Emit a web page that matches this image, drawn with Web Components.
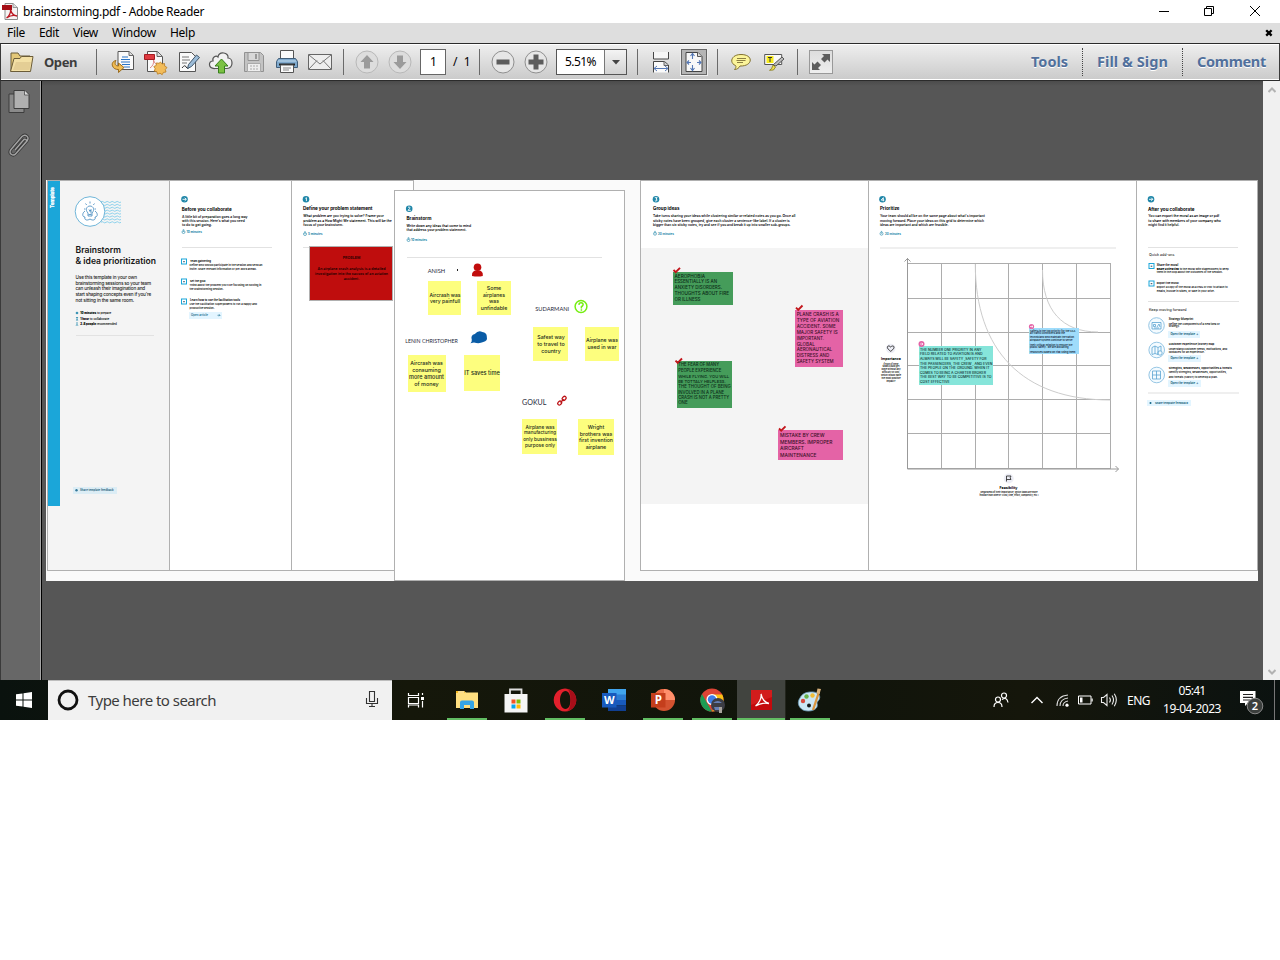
<!DOCTYPE html>
<html lang="en">
<head>
<meta charset="utf-8">
<title>brainstorming.pdf - Adobe Reader</title>
<style>
html,body{margin:0;background:#fff}
body{width:1280px;height:960px;overflow:hidden;font-family:"Noto Sans","Open Sans",sans-serif}
</style>
</head>
<body>
<reader-app></reader-app>
<script>
const define = (name, html, after) => customElements.define(name, class extends HTMLElement {
  constructor(){ super(); this.attachShadow({mode:'open'}); this.shadowRoot.innerHTML = html; }
  connectedCallback(){ if (after) after.call(this, this.shadowRoot); }
});

/* One line of text set to a given measure: w = width, s = font size */
define('fit-text', `<style>:host{display:block;white-space:nowrap}span{display:inline-block}</style><span><slot></slot></span>`,
function(root){
  const w = +this.getAttribute('w'), s = +this.getAttribute('s'), span = root.querySelector('span');
  if (s) this.style.fontSize = s + 'px';
  if (!w) return;
  const n = this.textContent.length, nat = span.getBoundingClientRect().width;
  const size = parseFloat(getComputedStyle(this).fontSize);
  const k = Math.min(1.12, Math.max(.78, w / nat));
  if (this.hasAttribute('flex')) this.style.fontSize = size * k + 'px';
  const now = span.getBoundingClientRect().width;
  span.style.letterSpacing = (w - now) / n + 'px';
});

define('title-bar', `<style>
:host{display:flex;height:23px;background:#fff;align-items:center;color:#000;font-size:12px}
svg{display:block}.logo{margin:0 4px 0 2px}fit-text{flex:1}
.win{display:flex;width:138px}.win svg{width:46px;height:20px}
</style>
<svg class="logo" width="17" height="17" viewBox="0 0 17 17"><path d="M3 .5h8l4.500 4V16.500H3z" fill="#f5f3f3" stroke="#8b8b8b"/><path d="M11 .5v4h4.500" fill="#ddd" stroke="#999"/><path d="M0 2h10v5H0z" fill="#a40d16"/><path d="M4.500 15c3-2 4.500-6 4-8.500 1 4 3 6 6.500 6.500-3-1.200-7-.3-10.500 2z" fill="none" stroke="#bb1721" stroke-width="1.300"/></svg>
<fit-text w="181">brainstorming.pdf - Adobe Reader</fit-text>
<div class="win"><svg viewBox="0 0 46 20"><path d="M17 9.500h10" stroke="#000"/></svg>
<svg viewBox="0 0 46 20"><path d="M16.500 6.500h7v7h-7zM18.500 6V4.500h7v7H24" fill="none" stroke="#000"/></svg>
<svg viewBox="0 0 46 20"><path d="M16 4l10 10m0-10l-10 10" stroke="#000" fill="none"/></svg></div>`);

define('menu-bar', `<style>
:host{display:flex;height:20px;background:#dedede;align-items:center;padding:0 7px 0 7px;box-sizing:border-box;font-size:12px;color:#000}
fit-text{margin-right:14px;line-height:18px}svg{margin-left:auto;margin-bottom:1px}
</style><fit-text w="18">File</fit-text><fit-text w="20">Edit</fit-text><fit-text w="25">View</fit-text><fit-text w="44">Window</fit-text><fit-text w="25">Help</fit-text>
<svg width="8" height="8" viewBox="0 0 8 8"><path d="M1.200 1.200l5.400 5.400m0-5.400L1.200 6.600" stroke="#000" stroke-width="2.300"/></svg>`);

define('tool-cell', `<style>
:host{display:flex;width:var(--w,33px);flex:none;align-items:center;justify-content:center;height:35px}
</style><slot></slot>`);
define('tool-sep', `<style>:host{display:block;width:var(--w,14px);flex:none}i{display:block;width:1px;height:26px;margin-left:7px;background:#6a6a6a}</style><i></i>`);
define('task-link', `<style>
:host{display:flex;align-items:center;height:28px;padding:0 14px;color:#51709c;font-weight:700;font-size:14.500px;text-shadow:0 1px #fff;border-right:1px dotted #444}
:host(:last-child){border:0;padding-right:13px}
::slotted(*){margin-bottom:2px}
</style><slot></slot>`);

define('tool-bar', `<style>
:host{display:flex;align-items:center;height:38px;box-sizing:border-box;border-top:1px solid #2b2b2b;border-bottom:1px solid #2b2b2b;background:linear-gradient(#fff 0 1px,#eee 1px,#cbcbcb 35px,#fff 35px);border-left:1px solid #3a3a3a;border-right:1px solid #3a3a3a;padding-left:8px}
svg{display:block;overflow:visible}
tool-cell>svg{margin-bottom:1px}
.open{width:45px;margin-left:9px;font-weight:700;font-size:13px;color:#3d3d3d}
.page{box-sizing:border-box;width:26px;height:26px;margin-left:4px;background:#fff;border:1px solid #666;font-size:12px;line-height:23px;padding-left:9px}
.of{width:19px;padding-left:7px;font-size:12px;margin-bottom:1px}
.combo{box-sizing:border-box;width:71px;height:26px;margin:0 3px 0 4px;background:#fff;border:1px solid #555;display:flex;align-items:center;font-size:12px;padding-left:8px}
.combo fit-text{margin-bottom:1px}
.combo b{margin-left:auto;width:21px;height:24px;border-left:1px solid #777;background:linear-gradient(#f4f4f4,#d2d2d2);display:flex;align-items:center;justify-content:center}
.on{box-sizing:border-box;width:26px;height:26px;border:1px solid #666;background:#b5b5b5;outline:1px solid #eee;display:flex;align-items:center;justify-content:center}
.full{box-sizing:border-box;width:24px;height:24px;border:1px solid #999;background:linear-gradient(#ddd,#eee)}
.links{margin-left:auto;display:flex}
</style>
<tool-cell style="--w:26px"><svg width="26" height="24" viewBox="0 0 26 24"><path d="M2 21V3h7l2 3h10v4" fill="#e4c878" stroke="#6b5c38"/><path d="M1.500 21.500L5 8.500l6 0 1.500-2H24L21.500 21.500z" fill="#f3e0a5" stroke="#6b5c38"/><path d="M4 20L7 12h15l-1.500 8z" fill="#dbc28b" opacity=".6"/></svg></tool-cell>
<div class="open"><fit-text w="33">Open</fit-text></div><tool-sep style="--w:16px"></tool-sep>
<tool-cell><svg width="26" height="26" viewBox="0 0 26 26"><path d="M9 2.500h11l4.500 4V20.500H9z" fill="#fafafa" stroke="#555"/><path d="M20 2.500v4h4" fill="#ddd" stroke="#666"/><path d="M13 8h6M12 10.500h9M12 13h9M13 15.500h8M15 18h6" stroke="#2b75c5" stroke-width="1.200"/><path d="M7 11.500c-3 .5-4.500 3-3.500 5.500 1 2.500 3 3.500 6 3.500v3l5.500-5-5.500-4.500v3c-3 0-4.500-2-2.500-5.500z" fill="#f0bb52" stroke="#9a6c1e"/></svg></tool-cell>
<tool-cell><svg width="26" height="26" viewBox="0 0 26 26"><path d="M5.500 2.500h10l5 5V22.500h-15z" fill="#fafafa" stroke="#555"/><path d="M15 2.500v5h5" fill="#ddd" stroke="#666"/><path d="M2.500 5.500h10v5h-10z" fill="#df3a40" stroke="#a51c22"/><path d="M8 19c3-2 4-5 3.500-8 1 3 2 4 4 5" fill="none" stroke="#d88" stroke-width="1"/><path d="M18.500 13l1.500 2 2.500-.5.2 2.600 2.300 1.400-1.700 2 .7 2.500-2.600.4-1.200 2.300-2.200-1.500-2.400 1-.8-2.500-2.600-.6 1-2.400-1.400-2.200 2.400-1 .2-2.600 2.600.4z" fill="#f2bc5a" stroke="#b87b20" stroke-width=".8"/></svg></tool-cell>
<tool-cell><svg width="26" height="26" viewBox="0 0 26 26"><path d="M4.500 3.500h12l4 4V22.500h-16z" fill="#fafafa" stroke="#555"/><path d="M7 8h7M7 11h8M7 14h5" stroke="#777"/><path d="M7 19q3-4 4-1t4 0" fill="none" stroke="#333"/><path d="M21.500 6l3 2.500-8 9-4 2 1-4z" fill="#9cbcd8" stroke="#42586c"/></svg></tool-cell>
<tool-cell><svg width="26" height="26" viewBox="0 0 26 26"><path d="M7 19.500C0 20 0 12 5 12 4 8 8 6 10 8c1-6 11-5 10 1 5 0 6 10-1 10.500z" fill="#f2f2f2" stroke="#555" stroke-width="1.200"/><path d="M13.500 10l6.500 7h-3.500v7h-6v-7H7z" fill="#7bc143" stroke="#38801c"/></svg></tool-cell>
<tool-cell><svg width="26" height="26" viewBox="0 0 26 26"><path d="M3.500 3.500h16l3 3v16h-19z" fill="#c3c3c3" stroke="#929292"/><path d="M7 3.500h11v8H7z" fill="#d8d8d8" stroke="#929292"/><path d="M14 5h2v5h-2z" fill="#999"/><path d="M6.500 14.500h13v8h-13z" fill="#eee" stroke="#aaa"/><path d="M9 17h8M9 20h8" stroke="#aaa" stroke-dasharray="2 1"/></svg></tool-cell>
<tool-cell><svg width="26" height="26" viewBox="0 0 26 26"><path d="M6.500 1.500h13v9h-13z" fill="#fafafa" stroke="#555"/><path d="M2.500 12.500l2-3h17l2 3v6h-21z" fill="#7fa9cd" stroke="#405d78"/><path d="M4 12h18" stroke="#c6def0"/><path d="M5 15.500h16" stroke="#222" stroke-width="2"/><path d="M6.500 16h13v7.500h-13z" fill="#fafafa" stroke="#555"/><path d="M9 19h8M9 21h6" stroke="#888"/></svg></tool-cell>
<tool-cell><svg width="26" height="26" viewBox="0 0 26 26"><path d="M1.500 5.500h23v15h-23z" fill="#eee" stroke="#666"/><path d="M2 20l8-8.500M24 20l-8-8.500M2 6l11 9L24 6" fill="none" stroke="#777"/></svg></tool-cell>
<tool-sep></tool-sep>
<tool-cell><svg width="24" height="24" viewBox="0 0 24 24"><circle cx="12" cy="12" r="11" fill="#ddd" stroke="#b8b8b8"/><path d="M12 5l6.500 7H15v6.500H9V12H5.500z" fill="#9b9b9b"/></svg></tool-cell>
<tool-cell><svg width="24" height="24" viewBox="0 0 24 24"><circle cx="12" cy="12" r="11" fill="#ddd" stroke="#b8b8b8"/><path d="M12 19l6.500-7H15V5.500H9V12H5.500z" fill="#9b9b9b"/></svg></tool-cell>
<div class="page">1</div><div class="of">/&nbsp; 1</div><tool-sep></tool-sep>
<tool-cell><svg width="24" height="24" viewBox="0 0 24 24"><circle cx="12" cy="12" r="11" fill="#e6e6e6" stroke="#8f8f8f"/><path d="M5.500 9.500h13v5h-13z" fill="#5c5c5c"/></svg></tool-cell>
<tool-cell><svg width="24" height="24" viewBox="0 0 24 24"><circle cx="12" cy="12" r="11" fill="#e6e6e6" stroke="#8f8f8f"/><path d="M4.500 9.500h5v-5h5v5h5v5h-5v5h-5v-5h-5z" fill="#5c5c5c"/></svg></tool-cell>
<div class="combo"><fit-text w="31">5.51%</fit-text><b><svg width="8" height="5"><path d="M0 0h8L4 4.500z" fill="#444"/></svg></b></div>
<tool-sep></tool-sep>
<tool-cell><svg width="18" height="22" viewBox="0 0 18 22"><path d="M1.500 1v7h15V1" fill="#f5f5f5" stroke="#444"/><path d="M1.500 21.500V10.500h11l4 3.500v7.500" fill="#fafafa" stroke="#444"/><path d="M12 10.500v4h4" fill="#ccc" stroke="#666"/><path d="M2 17.500h14M5 15l-3 2.500L5 20m8-5l3 2.500-3 2.500" fill="none" stroke="#5578b5"/></svg></tool-cell>
<tool-cell><div class="on"><svg width="18" height="20" viewBox="0 0 18 20"><path d="M1 .5h12l4 4v15H1z" fill="#f8f8f8" stroke="#444"/><path d="M12.500 .5v4h4" fill="#ddd" stroke="#555"/><path d="M7.500 2v5m0 6v5M2 10.500h4m6 0h4M5.500 4l2-2.500L9.500 4m-4 12l2 2.500 2-2.500M4 8.500l-2 2 2 2M14 8.500l2 2-2 2" fill="none" stroke="#5578b5" stroke-width="1.100"/></svg></div></tool-cell>
<tool-sep></tool-sep>
<tool-cell><svg width="20" height="18" viewBox="0 0 20 18"><path d="M10 1.500c13 0 12 12-1 11.500-1 2-3 3.500-5.500 3.500 1-1 2-3 1-4C-2 10 0 1.500 10 1.500z" fill="#fbf49a" stroke="#82722f"/><path d="M6 5.500h9M5.500 7.500h9M6 9.500h6" stroke="#8c7f42"/></svg></tool-cell>
<tool-cell><svg width="20" height="18" viewBox="0 0 20 18"><path d="M.7 1.500h17v10H.7z" fill="#fafafa" stroke="#555"/><path d="M2.500 3h7v7h-7z" fill="#f6ea1c"/><path d="M4 4.500h4M6 4.500V9" stroke="#333"/><path d="M18 4l2 2-8 7-3-1z" fill="#bbb" stroke="#555"/><path d="M9 12l2.500 2-2 3-4 .3 2-1.500z" fill="#f0df4c" stroke="#857a20" stroke-width=".8"/></svg></tool-cell>
<tool-sep></tool-sep>
<tool-cell style="--w:34px"><div class="full"><svg width="22" height="22" viewBox="0 0 22 22"><path d="M12 3h8v8l-2.500-2.500-3 3-3.500-3.500 3-3zM10 19H2v-8l2.500 2.500 3-3L11 14l-3 3z" fill="#5c5c5c"/></svg></div></tool-cell>
<div class="links"><task-link><fit-text w="37">Tools</fit-text></task-link><task-link><fit-text w="71">Fill &amp; Sign</fit-text></task-link><task-link><fit-text w="69">Comment</fit-text></task-link></div>`);

define('side-pane', `<style>
:host{display:flex;flex-direction:column;align-items:center;gap:19px;width:42px;box-sizing:border-box;padding-top:8px;background:#676767;border-left:1px solid #3a3a3a;border-right:1px solid #000;box-shadow:inset -1px 0 #a5a5a5}
svg{display:block;margin-right:4px}
</style>
<svg width="22" height="25" viewBox="0 0 22 25"><path d="M1 5h15v18.500H1z" fill="#8a8a8a" stroke="#3d3d3d"/><path d="M6 1.500h11l4 4V19.500H6z" fill="#b0b0b0" stroke="#3d3d3d"/><path d="M16.500 1.500v4.500h4" fill="#ddd" stroke="#3d3d3d" stroke-width=".7"/></svg>
<svg width="22" height="24" viewBox="0 0 22 24"><g fill="none"><path d="M7 17l8.500-10c1.500-2 4 0 2.500 2L8 20.500c-3 3.500-8 0-5-4L14 3.500c3-3 8 0 5 4.500L12 16" stroke="#383838" stroke-width="3"/><path d="M7 17l8.500-10c1.500-2 4 0 2.500 2L8 20.500c-3 3.500-8 0-5-4L14 3.500c3-3 8 0 5 4.500L12 16" stroke="#a4a4a4" stroke-width="1.400"/></g></svg>`);

define('scroll-rail', `<style>:host{display:flex;flex-direction:column;justify-content:space-between;align-items:center;width:17px;box-sizing:border-box;background:#f0f0f0;padding:6px 0 5px}svg{display:block}</style>
<svg width="8" height="6"><path d="M.5 5L4 1.500 7.500 5" fill="none" stroke="#b2b2b2" stroke-width="2"/></svg><svg width="8" height="6"><path d="M.5 1L4 4.500 7.500 1" fill="none" stroke="#b2b2b2" stroke-width="2"/></svg>`);

/* Board items are placed on a free canvas in document coordinates */
const X0 = 46, Y0 = 180;
function place(){ const a = n => +this.getAttribute(n); this.style.cssText += `left:${a('x')-X0}px;top:${a('y')-Y0}px;width:${a('w')}px;height:${a('h')}px;background:${this.getAttribute('c')||'#fff'}`; }
define('board-frame', `<style>:host{position:absolute;box-sizing:border-box;border:1px solid #b0b0b0}</style><slot></slot>`, place);
define('sticky-note', `<style>:host{position:absolute}</style><slot></slot>`, place);

const T = (x, s, style, rows, center) => rows.map(([cy, w, t]) =>
  `<fit-text flex w="${w}" s="${s}" style="position:absolute;left:${(center ? x - w/2 : x) - X0}px;top:${cy - 5 - Y0}px;height:10px;line-height:10px;${style}">${t}</fit-text>`).join('');
const B='font-weight:700;color:#000', M='font-weight:600;color:#000', U='font-weight:700;color:#1682a6';
const N = (x,y,w,h,c) => `<sticky-note x="${x}" y="${y}" w="${w}" h="${h}" c="${c}"></sticky-note>`;
const F = (x,w,c='#fff',y=180,h=391) => `<board-frame x="${x}" y="${y}" w="${w}" h="${h}" c="${c}"></board-frame>`;
const hr = (x,y,w,h=1) => N(x,y,w,h,h>1?'#efefef':'#e2e2e2');
const dot = (x,y,g) => `<circle cx="${x}" cy="${y}" r="3.300" fill="#1f86a8"/><path transform="translate(${x} ${y})" d="${g}" stroke="#fff" fill="none" stroke-width=".9"/>`;
const AR='M-2 0H1.800M.2-1.600L1.800 0 .2 1.600', box=(x,y)=>`<rect x="${x}" y="${y}" width="5" height="5" fill="#fff" stroke="#1ba6d9" stroke-width="1"/><path d="M${x+1.700} ${y+2.700}h1.600" stroke="#345"/>`;
const clock=(x,y)=>`<circle cx="${x}" cy="${y}" r="1.500" fill="none" stroke="#1682a6" stroke-width=".6"/><path d="M${x-.7} ${y-2.300}h1.400M${x} ${y-1}v1" stroke="#1682a6" stroke-width=".6"/>`;
const check=(x,y)=>`<path d="M${x-3} ${y}l2.200 2.200 4.300-4.400" stroke="#c3161c" stroke-width="1.900" fill="none"/>`;
const round=(x,y)=>`<circle cx="${x}" cy="${y}" r="7.800" fill="#f4fbff" stroke="#7cb8dd" stroke-width=".8"/>`;
const ping=(x,y,r)=>`<circle cx="${x}" cy="${y}" r="${r}" fill="#e463a6"/><path transform="translate(${x} ${y})" d="M-1.500 0H1.500M.2-1.200L1.500 0 .2 1.200" stroke="#fff" fill="none" stroke-width=".7"/>`;
const gx=[907.500,941.500,975.500,1008.500,1042.500,1076.500,1110.500], gy=[263.500,298.500,332.500,365.500,399.500,433.500,468.500];
let waves=''; for(let i=0;i<8;i++){ waves+=`<path d="M101 ${202+i*2.900}q1.200-1.200 2.500 0t2.500 0 2.500 0 2.500 0 2.500 0 2.500 0 2.500 0 2.500 0" fill="none" stroke="#62c3e8" stroke-width=".7"/>`; }

const art = `<svg viewBox="46 180 1212 401" width="1212" height="401">
${waves}<circle cx="90" cy="211.500" r="14.800" fill="#fff" stroke="#4ba3cf" stroke-width=".8"/>
<g fill="none" stroke="#3d87bd" stroke-width=".8"><path d="M88 213c-3-3-1.500-7 2-7s5 4 2 7v3h-4zM88.500 214.500h3M89 209.500l1 2 1-2v4"/><path d="M90 201.500v2M85.500 203.500l1.200 1.500M94.500 203.500l-1.200 1.500M84 209h1.500M94.500 209H96"/><path d="M85 211c-3 2-3 6 0 6-1 3 2 4 5 2 3 2 6 1 5-2 3 0 3-4 0-6"/></g>
<g fill="#3c95b5"><circle cx="77" cy="313" r="1.300"/><path d="M75.800 317h2.500l-1 1.700 1 1.700h-2.500l1-1.700z"/><circle cx="77" cy="323" r=".8"/><path d="M75.500 325.500q1.500-2.500 3 0z"/></g>
${dot(184.500,199.300,AR)}${dot(306,199.300,'M-.6-1L.4-1.600V1.800')}${dot(409.200,208.700,'M-1.200-1.500q3-.5 1.500 1.500l-1.500 1.600h2.800')}${dot(656,199.300,'M-1.200-1.600h2.400L0-.2q2 .5.500 1.800-.8.300-1.600-.2')}${dot(882.500,199.300,'M.8 2V-1.600L-1.300.8H1.800')}${dot(1151,199.300,AR)}
${clock(183.500,232)}${clock(305,234)}${clock(408.500,240)}${clock(655,233.700)}${clock(881.500,233.700)}
${box(181.500,259)}${box(181.500,279)}${box(181.500,299)}${box(1149,263.500)}${box(1149,281)}
<path d="M217.500 315.300h2.500m-1-1l1 1-1 1" stroke="#168" stroke-width=".6" fill="none"/>
<circle cx="477.500" cy="267.300" r="3.800" fill="#c10d0d"/><path d="M472 276q-.5-6 5.500-5.500 6-.5 5.300 5.500-5 1-10.800 0z" fill="#c10d0d"/><path d="M457.500 269v2" stroke="#222"/>
<circle cx="581" cy="306.500" r="5.900" fill="none" stroke="#76ee12" stroke-width="1.500"/><path d="M578.900 304.900q.2-2.200 2.300-2.100 2.200.2 1.900 2-.4 1.300-1.700 1.900v1.800M581.400 309.300v1.500" fill="none" stroke="#76ee12" stroke-width="1.500"/>
<path d="M474 342.500l-3.500.8q1.500-1.500 1.300-3.500-1.500-4.800 3-5.800 3.500-4 7.500-2 4.500.5 4.500 4.500 1 4.500-3.500 5.500-4 2-9.300.5z" fill="#0a5ca6"/>
<g fill="none" stroke="#bc1216" stroke-width="1.300"><rect x="557.500" y="401.500" width="4.300" height="3.200" rx="1.500" transform="rotate(-45 559.600 403)"/><rect x="562" y="396.700" width="4.300" height="3.200" rx="1.500" transform="rotate(-45 564.200 398.300)"/><path d="M560.500 402.500l3.200-3.300"/></g>
${check(676.500,270)}${check(799,307.700)}${check(678.500,360.700)}${check(782,428.500)}
<g stroke="#adadad" fill="none" stroke-width="1">${gx.map(x=>`<path d="M${x} 263V469"/>`).join('')}${gy.map(y=>`<path d="M907 ${y}H1111"/>`).join('')}
<path d="M907.500 258V469H1118.500M904.500 261.500l3-3 3 3M1115.500 466l3 3-3 3" stroke="#999"/></g>
<path d="M975.300 264C975.300 350 1022 400 1110.300 400M1042.500 270C1042.500 310 1062 332 1098 332" fill="none" stroke="#ccc"/>
<circle cx="890.700" cy="348.500" r="4.800" fill="#edeef6"/><path d="M890.700 351.300c-6-4-2.500-7 0-4.300 2.500-2.700 6 .3 0 4.300z" fill="none" stroke="#222" stroke-width=".9"/>
<circle cx="1008.700" cy="478.500" r="5" fill="#edeef6"/><path d="M1006.500 481.500v-5.500h4.500l-.8 1.800.8 1.700h-4.500" fill="none" stroke="#222" stroke-width=".8"/>
${round(1156.500,325.500)}${round(1156.700,350)}${round(1156.700,375)}
<g fill="none" stroke="#5aa5d2" stroke-width=".8"><path d="M1152 322.500h9v6.500h-9zM1153.500 324.500h2v2h-2zM1157 327l2-3 1 3M1154 328h5"/><path d="M1152 347.500l3-1.500v7.500l-3 1zM1155 346l3 1.500v7l-3-1M1158 347.500l3-1.500v5"/><circle cx="1160" cy="353" r="2.200"/><path d="M1152.500 371h8v8h-8zM1156.500 371v8M1152.500 375h8"/></g>
</svg>`;

const overlay = `<svg viewBox="46 180 1212 401" width="1212" height="401">${ping(921.500,344,3)}${ping(1031.500,326.500,2.600)}<circle cx="1150.500" cy="403" r="1" fill="#168"/><circle cx="76.500" cy="490.300" r="1.200" fill="#379"/></svg>`;
const Y='#fdfe7e', K='font-weight:500;color:#1c2b1c', D='font-weight:500;color:#0c2c18', R='font-weight:500;color:#3d1028', L='color:#1f2a3c;font-family:Lato,Inter,sans-serif;';

define('mural-board', `<style>
:host{display:block;position:relative;width:1212px;height:401px;background:#fafafa;font-family:Inter,"Liberation Sans",sans-serif;overflow:hidden}
svg{position:absolute;left:0;top:0;display:block}
.tag{position:absolute;left:1px;top:7px;width:12px;height:21px;writing-mode:vertical-rl;transform:rotate(180deg);font-size:4.600px;line-height:12px;font-weight:700;color:#fff;text-align:right;-webkit-text-stroke:.3px #fff}
</style>
${F(47,123,'#f4f4f4')}${F(169,123)}${F(291,123)}${F(394,231,'#fff',190,391)}${F(640,229)}${F(868,269)}${F(1136,122)}
${N(48,181,12,325,'#1ba6d9')}<div class="tag">Template</div>
${N(641,248,227,256,'#f4f4f4')}
${hr(76,335,78)}${hr(182,247,90)}${hr(303,247,10)}${hr(407,257,195)}${hr(880,247,236,2)}${hr(1148,247,90)}${hr(1148,301,91)}${hr(1148,392,91,2)}
<board-frame x="309" y="246" w="84" h="55" c="#bf0d0d"></board-frame>
${N(73,487,44,6.500,'#dcedf5')}${N(189,312,33,7,'#e3f5ff')}${N(1168,331,31.500,6.500,'#e3f5ff')}${N(1168,355,33,6.500,'#e3f5ff')}${N(1168,380,33,6.500,'#e3f5ff')}${N(1147,400,43.500,6,'#e3f5ff')}
${N(428,281,33,34,Y)}${N(477,281,34,34,Y)}${N(533,327,35,34,Y)}${N(585,327,34,34,Y)}${N(408,355,38,37,Y)}${N(464,355,36,36,Y)}${N(522,419,35,35,Y)}${N(578,419,36,36,Y)}
${N(673,272,60,33,'#459c5a')}${N(677,361,55,47,'#459c5a')}${N(795,310,48,57,'#e463a6')}${N(778,430,65,30,'#e463a6')}
${art}
${N(919,346,74,39,'#86e5da')}${N(1029,328,50,26,'#9fdcfb')}${overlay}
${T(75.500,9,'font-weight:600;color:#151515',[[250,45.500,'Brainstorm'],[261,80.500,'&amp; idea prioritization']])}
${T(75.500,6,'font-weight:500;color:#222',[[276.500,61.500,'Use this template in your own'],[282.500,75.500,'brainstorming sessions so your team'],[288,69.500,'can unleash their imagination and'],[293.500,75.500,'start shaping concepts even if you\'re'],[299.500,58.500,'not sitting in the same room.']])}
${T(80.300,3,M,[[313,31,'<b>10 minutes</b> to prepare'],[318.700,29,'<b>1 hour</b> to collaborate'],[324,36.500,'<b>2-8 people</b> recommended']])}
${T(80,3.200,'font-weight:700;color:#27637c',[[490,33.500,'Share template feedback']])}
${T(181.700,5,B,[[209.500,50,'Before you collaborate']])}
${T(182,4,M,[[216.500,65.500,'A little bit of preparation goes a long way'],[220.800,62.700,'with this session. Here\'s what you need'],[225,30,'to do to get going.']])}
${T(186.500,3.200,U,[[232,15.500,'10 minutes']])}
${T(190,3,B,[[261,21,'Team gathering'],[281,15.500,'Set the goal'],[300,50,'Learn how to use the facilitation tools']])}
${T(189.500,3,M,[[264.700,73,'Define who should participate in the session and send an'],[268.700,67,'invite. Share relevant information or pre-work ahead.'],[285.300,72,'Think about the problem you\'ll be focusing on solving in'],[289,34,'the brainstorming session.'],[304,67.500,'Use the Facilitation Superpowers to run a happy and'],[308,25,'productive session.']])}
${T(191,3,'font-weight:600;color:#166a8a',[[315,17,'Open article']])}
${T(303,5,B,[[208.500,69.500,'Define your problem statement']])}
${T(303.300,4,M,[[215.700,80.500,'What problem are you trying to solve? Frame your'],[220.500,88.500,'problem as a How Might We statement. This will be the'],[225,40,'focus of your brainstorm.']])}
${T(308,3.200,U,[[234,14.500,'5 minutes']])}
${T(351.500,4,'font-weight:600;color:#200',[[257.500,17.500,'PROBLEM'],[269,68,'An airplane crash analysis is a detailed'],[274,73,'investigation into the causes of an aviation'],[279,15.500,'accident.']],1)}
${T(406.500,4.800,B,[[218.500,25,'Brainstorm']])}${T(406.500,3.800,M,[[225.700,64.500,'Write down any ideas that come to mind'],[229.700,60,'that address your problem statement.']])}${T(411,3.200,U,[[240,16,'10 minutes']])}
${T(427.700,5.800,L,[[271,17.500,'ANISH']])}${T(535.200,5.800,L,[[309,34,'SUDARMANI']])}${T(405.300,5.800,L,[[341,52.500,'LENIN CHRISTOPHER']])}${T(522,7,L,[[402.500,24.500,'GOKUL']])}
${T(445,5.200,K,[[294.500,31,'Aircrash was'],[301.300,30,'very painfull']],1)}
${T(494,5.200,K,[[288.300,14.500,'Some'],[294.500,22,'airplanes'],[301.300,10,'was'],[308,26.500,'unfindable']],1)}
${T(551,5.200,K,[[337,27.500,'Safest way'],[344,27.500,'to travel to'],[351,19.500,'country']],1)}
${T(602,5.200,K,[[340.300,32,'Airplane was'],[347.300,29,'used in war']],1)}
${T(426.500,5.400,K,[[363,32.500,'Aircrash was'],[370,28.500,'consuming'],[377,35,'more amount'],[384,24.500,'of money']],1)}
${T(482,5.400,K,[[373,35.500,'IT saves time']],1)}
${T(540,4.900,K,[[427,29,'Airplane was'],[433,32,'manufacturing'],[439.300,33.500,'only bussiness'],[445.300,30,'purpose only']],1)}
${T(596,5.200,K,[[427,16.500,'Wright'],[433.500,32.500,'brothers was'],[440.300,34,'first invention'],[447,20.500,'airplane']],1)}
${T(653,4.800,B,[[208.500,26.500,'Group ideas']])}
${T(653,4,M,[[215.700,142.500,'Take turns sharing your ideas while clustering similar or related notes as you go. Once all'],[220.700,136.500,'sticky notes have been grouped, give each cluster a sentence-like label. If a cluster is'],[225,137.500,'bigger than six sticky notes, try and see if you and break it up into smaller sub-groups.']])}
${T(658,3.200,U,[[234,16,'20 minutes']])}
${T(674.500,5,D,[[276.300,30.500,'AEROPHOBIA'],[282.300,42.500,'ESSENTIALLY IS AN'],[288.300,47.500,'ANXIETY DISORDERS.'],[294.300,54.500,'THOUGHTS ABOUT FIRE'],[300.300,26,'OR ILLNESS']])}
${T(678.200,4.800,D,[[365.300,41,'THE FEAR OF MANY'],[371,43,'PEOPLE EXPERIENCE'],[376.500,51,'WHILE FLYING. YOU WILL'],[381.700,47.500,'BE TOTTALY HELPLESS.'],[387.300,52.500,'THE THOUGHT OF BEING'],[392.500,46,'INVOLVED IN A PLANE'],[397.700,51,'CRASH IS NOT A PRETTY'],[403.300,9.500,'ONE']])}
${T(796.700,5,R,[[315.300,42,'PLANE CRASH IS A'],[321.300,42.500,'TYPE OF AVIATION'],[327.300,39,'ACCIDENT. SOME'],[333.300,41,'MAJOR SAFETY IS'],[339.300,27.500,'IMPORTANT.'],[344.500,18,'GLOBAL'],[350.300,35.500,'AERONAUTICAL'],[356.300,32.500,'DISTRESS AND'],[362.300,37,'SAFETY SYSTEM']])}
${T(780,5.300,R,[[435.300,44.500,'MISTAKE BY CREW'],[442,52.500,'MEMBERS. IMPROPER'],[448.300,24,'AIRCRAFT'],[455,36.500,'MAINTENANCE']])}
${T(880,4.800,B,[[208.500,19.500,'Prioritize']])}
${T(880,4,M,[[215.700,105,'Your team should all be on the same page about what\'s important'],[220.700,104,'moving forward. Place your ideas on this grid to determine which'],[225,68.500,'ideas are important and which are feasible.']])}
${T(885,3.200,U,[[234,16,'20 minutes']])}
${T(891,3.800,B,[[359,20,'Importance']],1)}
${T(891,2.500,M,[[364,15,'If each of these'],[367,17,'tasks could get'],[370,19,'done without any'],[373,18,'difficulty or cost,'],[376,20,'which would have'],[379,19,'the most positive'],[382,9,'impact?']],1)}
${T(920,4.500,'font-weight:500;color:#0c2c2c',[[350,61.500,'THE NUMBER ONE PRIORITY IN ANY'],[354,62.500,'FIELD RELATED TO AVIATION IS AND'],[359,66.500,'ALWAYS WILL BE SAFETY ,SAFETY FOR'],[363.500,72.500,'THE PASSENGERS, THE CREW , AND EVEN'],[368,69.500,'THE PEOPLE ON THE GROUND. WHEN IT'],[373,66,'COMES TO BEING A CHARTER BROKER'],[377,71.500,'THE BEST WAY TO BE COMPETITIVE IS TO'],[382,29.500,'COST EFFECTIVE']])}
${T(1030,2.900,'font-weight:600;color:#123',[[331,45.500,'Safety is the top priority for the FAA'],[334.300,35,'air traffic controllers and the'],[338,44,'technicians who maintain the nation'],[341.300,42.500,'airspace system continue to serve'],[344.500,42.500,'their critical mission to ensure the'],[348.300,38.500,'public safety . we are allocating'],[351.500,45.500,'resources based on risk using them']])}
${T(1008.500,3.800,B,[[487.500,18,'Feasibility']],1)}${T(1009,2.500,M,[[493,57,'Regardless of their importance, which tasks are more'],[496.300,59,'feasible than others? (Cost, time, effort, complexity, etc.)']],1)}
${T(1148,5,B,[[209.500,46.500,'After you collaborate']])}
${T(1148.300,4,M,[[215.700,71,'You can export the mural as an image or pdf'],[220.700,72.500,'to share with members of your company who'],[225,31,'might find it helpful.']])}
${T(1149,4,'font-weight:500;color:#333',[[254.700,25.500,'Quick add-ons'],[309.700,37.500,'Keep moving forward']])}
${T(1156.700,3,B,[[265,21.500,'Share the mural'],[283,22,'Export the mural']])}
${T(1156.700,3,M,[[269,72,'<b>Share a view link</b> to the mural with stakeholders to keep'],[272.300,66,'them in the loop about the outcomes of the session.'],[287.300,71,'Export a copy of the mural as a PNG or PDF to attach to'],[290.700,58,'emails, include in slides, or save in your drive.']])}
${T(1168.700,3,B,[[319,24.500,'Strategy blueprint'],[344,45.500,'Customer experience journey map'],[368,63,'Strengths, weaknesses, opportunities &amp; threats']])}
${T(1168.700,3,M,[[324,51,'Define the components of a new idea or'],[327.300,11,'strategy.'],[349,58.500,'Understand customer needs, motivations, and'],[352.300,36,'obstacles for an experience.'],[373.300,58,'Identify strengths, weaknesses, opportunities,'],[377,49,'and threats (SWOT) to develop a plan.']])}
${T(1170.500,3.100,'font-weight:700;color:#155d7a',[[334.300,28,'Open the template →'],[358.300,28,'Open the template →'],[383.300,28,'Open the template →']])}
${T(1155,3.200,'font-weight:700;color:#155d7a',[[403,33,'Share template feedback']])}`);

define('doc-view', `<style>:host{display:flex;height:599px;background:#555}
main{flex:1;display:flex;align-items:flex-start;padding:99px 0 0 4px;background:linear-gradient(#4b4b4b,#565656 5px)}</style>
<side-pane></side-pane><main><mural-board></mural-board></main><scroll-rail></scroll-rail>`);

define('task-app', `<style>
:host{display:flex;box-sizing:border-box;width:49px;height:40px;align-items:center;justify-content:center;position:relative;flex:none}
:host([active]){background:#41443f;box-shadow:inset -1px 0 #23261d}
:host([open])::after{content:"";position:absolute;left:5px;right:4px;bottom:0;height:2px;background:#62bd63}
:host([active])::after{left:0!important;right:1px!important}
::slotted(svg){display:block;overflow:visible}
</style><slot></slot>`);

define('task-bar', `<style>
:host{display:flex;height:40px;background:linear-gradient(90deg,#0a120e,#15170a 32%,#10140b 65%,#15160b 80%,#0b1210);color:#fff}
.start{width:48px;display:flex;align-items:center;justify-content:center}
.search{box-sizing:border-box;width:344px;background:#f1f1f1;border-top:1px solid #bdbdbd;display:flex;align-items:center;color:#3c3c3c;font-size:15px;padding:0 12px 1px 9px}
.search fit-text{flex:1;margin-left:9px;margin-bottom:1px}
svg{display:block;overflow:visible}.tray{margin-left:auto;display:flex;align-items:center;font-size:12px}
.clock{width:62px;margin:0 18px 0 11px;line-height:18px;display:flex;flex-direction:column;align-items:center}
.note{position:relative;margin-right:11px;margin-top:2px}.desk{width:5px;height:40px;border-left:1px solid #777}
</style>
<div class="start"><svg width="16" height="16"><path d="M0 2.300L6.500 1.400V7.500H0zM7.500 1.200L16 0v7.500H7.500zM0 8.500h6.500v6.100L0 13.700zM7.500 8.500H16V16l-8.500-1.200z" fill="#fff"/></svg></div>
<div class="search"><svg width="22" height="22"><circle cx="11" cy="11" r="9" fill="none" stroke="#111" stroke-width="2.800"/></svg><fit-text w="128">Type here to search</fit-text>
<svg width="16" height="18" viewBox="0 0 16 18"><path d="M5.500 .5h5v10h-5zM2.500 7v5.500h11V7M8 12.500V15M5 15.500h6" fill="none" stroke="#333" stroke-width="1.100"/></svg></div>
<task-app><svg width="16" height="16" viewBox="0 0 16 16"><path d="M-.5 1v2.500h10V1M-.5 5.500h10v6H-.5zM-.5 15.500V13h10v2.500M13.500 1v2M13.500 9v6.500" fill="none" stroke="#fff" stroke-width="1.200"/><path d="M12 5h3v3h-3z" fill="#fff"/></svg></task-app>
<task-app open style="margin-left:1px"><svg width="22" height="20" viewBox="0 0 22 20"><path d="M0 1h8l2 1.500h12V18H0z" fill="#ffdf80"/><path d="M0 1h8l1 2H0z" fill="#f5b91e"/><path d="M2 2h6" stroke="#fff"/><path d="M4 19v-6.500q0-2 2-2h10q2 0 2 2V19h-4v-4H8v4z" fill="#36a5e6"/></svg></task-app>
<task-app><svg width="24" height="25" viewBox="0 0 24 25"><path d="M6 8V1.500h11.500V8" fill="none" stroke="#ddd" stroke-width="1.800"/><path d="M.5 6h23v18.500H.5z" fill="#f5f5f5"/><path d="M7.500 11.500h4v4h-4z" fill="#f35325"/><path d="M12.500 11.500h4v4h-4z" fill="#81bc06"/><path d="M7.500 16.500h4v4h-4z" fill="#05a6f0"/><path d="M12.500 16.500h4v4h-4z" fill="#ffba08"/></svg></task-app>
<task-app open><svg width="24" height="24" viewBox="0 0 24 24"><path fill-rule="evenodd" d="M12 .5a11.300 11.500 0 1 0 .01 0zM12.500 3c3.200 0 5 4 5 9s-1.800 9-5 9-5.500-4-5.500-9 2.300-9 5.500-9z" fill="#e2202c"/><path d="M14 1c6 1 9.300 6 9.300 11s-3.300 10-9.300 11c3-2 3.500-6 3.500-11S17 3 14 1z" fill="#a70e19"/></svg></task-app>
<task-app><svg width="24" height="22" viewBox="0 0 24 22"><path d="M6 0h18v6H6z" fill="#41a5ee"/><path d="M6 5.500h18V11H6z" fill="#2b7cd3"/><path d="M6 11h18v5.500H6z" fill="#185abd"/><path d="M6 16.500h18V22H6z" fill="#103f91"/><path d="M0 4h14.500v14.500H0z" fill="#185abd"/><text x="7.300" y="15" font-family="Open Sans,sans-serif" font-size="11" font-weight="700" text-anchor="middle" fill="#fff">W</text></svg></task-app>
<task-app open><svg width="24" height="22" viewBox="0 0 24 22"><circle cx="13" cy="11" r="11" fill="#d35230"/><path d="M13 0a11 11 0 0 1 11 11H13z" fill="#ff8f6b"/><path d="M13 0a11 11 0 0 0-11 11h11z" fill="#ed6c47"/><path d="M0 4h14.500v14.500H0z" fill="#c43e1c"/><text x="7.300" y="15.200" font-family="Open Sans,sans-serif" font-size="11.500" font-weight="700" text-anchor="middle" fill="#fff">P</text></svg></task-app>
<task-app open><svg width="24" height="24" viewBox="0 0 24 24"><circle cx="12" cy="12" r="11.500" fill="#dd4436"/><path d="M2 6L7 15 12 23.500A11.500 11.500 0 0 1 2 6z" fill="#1c9c54"/><path d="M12 6.500h10.200A11.500 11.500 0 0 1 12 23.500l5-8z" fill="#fbc116"/><circle cx="12" cy="11.500" r="5.500" fill="#fff"/><circle cx="12" cy="11.500" r="4.200" fill="#3d7de8"/><circle cx="18" cy="17" r="7" fill="#3c3d44"/><path d="M13 15q5-4 9 0M14 19h5v3h-4z" fill="#657fb5"/><path d="M19 19h3v6h-3z" fill="#a8a39c"/></svg></task-app>
<task-app active open style="margin-left:1px"><svg width="22" height="20" viewBox="0 0 22 20"><path d="M0 0h21v20H0z" fill="#c40a0d"/><path d="M0 0h21v7L0 15z" fill="#d21c1c"/><path d="M4.500 16c3-2 6.500-8 5.500-12 1 5 4 8.500 8 9.500-4-1-9 0-13.500 2.500z" fill="none" stroke="#fff" stroke-width="1.300"/></svg></task-app>
<task-app open style="margin-left:-1px"><svg width="24" height="24" viewBox="0 0 24 24"><path d="M12 4c9-1 12 5 8 9-2 2 0 3-1 6-2 4-9 5-14 3-5-3-6-8-3-12 2-4 5-5.500 10-6z" fill="#cbe6f5" stroke="#6d9db8" stroke-width=".8"/><circle cx="5" cy="13" r="2.200" fill="#d94a3d"/><circle cx="8.500" cy="8.500" r="2.200" fill="#68b34b"/><circle cx="14.500" cy="7.500" r="2.200" fill="#f0bd37"/><circle cx="11" cy="17.500" r="2" fill="#16191a"/><path d="M21 4l-6 18" stroke="#d9943e" stroke-width="2.300"/><path d="M18.500 5l1-4.500 3.500.5-1.500 5z" fill="#d8b07a"/></svg></task-app>
<div class="tray">
<svg style="margin-right:22px" width="16" height="16" viewBox="0 0 16 16"><g fill="none" stroke="#fff" stroke-width="1.200"><circle cx="5" cy="7.500" r="2.500"/><path d="M1 15q0-4.500 4-4.500t4 4.500"/><circle cx="11" cy="3.500" r="2.500"/><path d="M9 7.500q5-3 6 3"/></g></svg>
<svg style="margin-right:13px" width="12" height="8"><path d="M.5 7L6 1.500 11.500 7" fill="none" stroke="#fff" stroke-width="1.400"/></svg>
<svg style="margin-right:9px" width="13" height="13" viewBox="0 0 13 13"><g fill="none" stroke="#ddd" stroke-width="1.100"><path d="M1 12Q1 2 12 1M4 12Q4 5 12 4M7 12Q7 8 12 7"/></g><circle cx="11" cy="11.200" r="1.600" fill="#fff"/></svg>
<svg style="margin-right:8px" width="15" height="10"><path d="M.5 1h12.500v8H.5z" fill="none" stroke="#fff"/><path d="M2 2.500h2.500v5H2zM13.500 3.500h1.200v3h-1.200z" fill="#fff"/></svg>
<svg style="margin-right:10px" width="16" height="14" viewBox="0 0 16 14"><path d="M.5 4.500h2l3.500-3v11l-3.500-3h-2zM8.500 4.500q1.800 2.500 0 5M11 2.500q3 4.500 0 9M13.300.8q4 6 0 12.400" fill="none" stroke="#eee" stroke-width="1.100"/></svg>
<fit-text w="23">ENG</fit-text>
<div class="clock"><fit-text w="27">05:41</fit-text><fit-text w="58">19-04-2023</fit-text></div>
<svg class="note" width="22" height="22" viewBox="0 0 22 22"><path d="M-1 1h15.500v12H7l-3 3v-3h-5z" fill="#fff"/><path d="M2 4.500h10M2 7.300h10M2 10h7" stroke="#222" stroke-width="1.200"/><circle cx="14" cy="16" r="7.800" fill="#3b3f3d" stroke="#888"/><text x="14" y="20" font-family="Noto Sans,sans-serif" font-size="11" font-weight="600" text-anchor="middle" fill="#fff">2</text></svg>
<div class="desk"></div></div>`);

define('reader-app', `<style>:host{display:flex;flex-direction:column;width:1280px}</style>
<title-bar></title-bar><menu-bar></menu-bar><tool-bar></tool-bar><doc-view></doc-view><task-bar></task-bar>`);
</script>
</body>
</html>
